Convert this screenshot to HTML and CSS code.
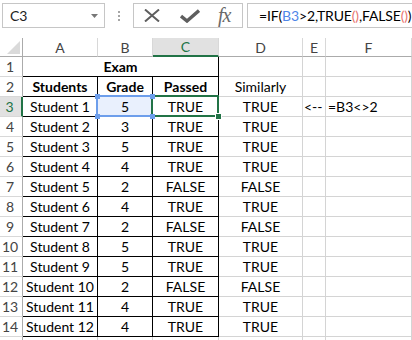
FILE: index.html
```html
<!DOCTYPE html>
<html lang="en">
<head>
    <meta charset="UTF-8">
    <title>Exam - Similarly</title>
    <link rel="stylesheet" href="styles.css">
</head>
<body>
    <div class="formula-bar">
        <div class="name-box">
            <span>C3</span>
            <svg class="dropdown" width="7" height="4" viewBox="0 0 7 4"><path d="M0 0 H7 L3.5 4 Z" fill="#777"/></svg>
        </div>
        <div class="grip"><i></i><i></i><i></i></div>
        <div class="fx-buttons">
            <svg class="icon-cancel" width="16" height="13" viewBox="0 0 16 13"><path d="M1 0.5 L15 12.5 M15 0.5 L1 12.5" stroke="#5e5e5e" stroke-width="2" fill="none"/></svg>
            <svg class="icon-enter" width="20" height="14" viewBox="0 0 20 14"><path d="M1 7 L7 12 L19 1.5" stroke="#5e5e5e" stroke-width="3.4" fill="none"/></svg>
            <span class="fx">fx</span>
        </div>
        <div class="formula-input">=IF(<span class="ref">B3</span>&gt;2,TRUE<span class="paren">()</span>,FALSE<span class="paren">()</span>)</div>
    </div>

    <div class="sheet">
        <!-- en-tetes de colonnes -->
        <div class="corner"></div>
        <div class="ch">A</div>
        <div class="ch">B</div>
        <div class="ch active">C</div>
        <div class="ch">D</div>
        <div class="ch">E</div>
        <div class="ch">F</div>

        <div class="rh">1</div>
        <div class="cell boxed bold span3">Exam</div>
        <div class="cell"></div>
        <div class="cell"></div>
        <div class="cell"></div>

        <div class="rh">2</div>
        <div class="cell boxed bold">Students</div>
        <div class="cell boxed bold">Grade</div>
        <div class="cell boxed bold">Passed</div>
        <div class="cell">Similarly</div>
        <div class="cell"></div>
        <div class="cell"></div>

        <div class="rh active">3</div>
        <div class="cell boxed">Student 1</div>
        <div class="cell boxed ref-cell">5
            <span class="handle tl"></span><span class="handle tr"></span><span class="handle bl"></span><span class="handle br"></span>
        </div>
        <div class="cell boxed active-cell">TRUE</div>
        <div class="cell">TRUE</div>
        <div class="cell left arrow">&lt;--</div>
        <div class="cell left note">=B3&lt;&gt;2</div>

        <div class="rh">4</div>
        <div class="cell boxed">Student 2</div>
        <div class="cell boxed">3</div>
        <div class="cell boxed">TRUE</div>
        <div class="cell">TRUE</div>
        <div class="cell"></div>
        <div class="cell"></div>

        <div class="rh">5</div>
        <div class="cell boxed">Student 3</div>
        <div class="cell boxed">5</div>
        <div class="cell boxed">TRUE</div>
        <div class="cell">TRUE</div>
        <div class="cell"></div>
        <div class="cell"></div>

        <div class="rh">6</div>
        <div class="cell boxed">Student 4</div>
        <div class="cell boxed">4</div>
        <div class="cell boxed">TRUE</div>
        <div class="cell">TRUE</div>
        <div class="cell"></div>
        <div class="cell"></div>

        <div class="rh">7</div>
        <div class="cell boxed">Student 5</div>
        <div class="cell boxed">2</div>
        <div class="cell boxed">FALSE</div>
        <div class="cell">FALSE</div>
        <div class="cell"></div>
        <div class="cell"></div>

        <div class="rh">8</div>
        <div class="cell boxed">Student 6</div>
        <div class="cell boxed">4</div>
        <div class="cell boxed">TRUE</div>
        <div class="cell">TRUE</div>
        <div class="cell"></div>
        <div class="cell"></div>

        <div class="rh">9</div>
        <div class="cell boxed">Student 7</div>
        <div class="cell boxed">2</div>
        <div class="cell boxed">FALSE</div>
        <div class="cell">FALSE</div>
        <div class="cell"></div>
        <div class="cell"></div>

        <div class="rh">10</div>
        <div class="cell boxed">Student 8</div>
        <div class="cell boxed">5</div>
        <div class="cell boxed">TRUE</div>
        <div class="cell">TRUE</div>
        <div class="cell"></div>
        <div class="cell"></div>

        <div class="rh">11</div>
        <div class="cell boxed">Student 9</div>
        <div class="cell boxed">5</div>
        <div class="cell boxed">TRUE</div>
        <div class="cell">TRUE</div>
        <div class="cell"></div>
        <div class="cell"></div>

        <div class="rh">12</div>
        <div class="cell boxed">Student 10</div>
        <div class="cell boxed">2</div>
        <div class="cell boxed">FALSE</div>
        <div class="cell">FALSE</div>
        <div class="cell"></div>
        <div class="cell"></div>

        <div class="rh">13</div>
        <div class="cell boxed">Student 11</div>
        <div class="cell boxed">4</div>
        <div class="cell boxed">TRUE</div>
        <div class="cell">TRUE</div>
        <div class="cell"></div>
        <div class="cell"></div>

        <div class="rh">14</div>
        <div class="cell boxed">Student 12</div>
        <div class="cell boxed">4</div>
        <div class="cell boxed">TRUE</div>
        <div class="cell">TRUE</div>
        <div class="cell"></div>
        <div class="cell"></div>

        <!-- ligne 15, coupee par le bas de la fenetre -->
        <div class="rh"></div>
        <div class="cell"></div>
        <div class="cell"></div>
        <div class="cell"></div>
        <div class="cell"></div>
        <div class="cell"></div>
        <div class="cell"></div>
    </div>
</body>
</html>
```

FILE: styles.css
```css
body {
    margin: 0;
    width: 412px;
    height: 340px;
    overflow: hidden;
    background: #fff;
    font-family: Lato, 'Liberation Sans', sans-serif;
    font-size: 14px;
    color: #000;
}
.formula-bar {
    display: flex;
    align-items: flex-start;
    height: 38px;
    padding-top: 3px;
    box-sizing: border-box;
}
.name-box {
    margin-left: 2px;
    width: 103px;
    height: 25px;
    box-sizing: border-box;
    border: 1px solid #c6c6c6;
    display: flex;
    align-items: center;
    padding-left: 7px;
    padding-right: 6px;
    color: #222;
}
.dropdown {
    margin-left: auto;
}
.grip {
    width: 28px;
    height: 25px;
    display: flex;
    flex-direction: column;
    align-items: center;
    justify-content: center;
    gap: 2px;
}
.grip i {
    width: 2px;
    height: 2px;
    background: #a6a6a6;
}
.fx-buttons {
    width: 110px;
    height: 25px;
    box-sizing: border-box;
    border: 1px solid #c6c6c6;
    display: flex;
    align-items: center;
    padding-left: 10px;
}
.icon-cancel {
    margin-right: 20px;
}
.icon-enter {
    margin-right: 18px;
}
.fx {
    font-family: 'Liberation Serif', serif;
    font-style: italic;
    font-size: 20px;
    color: #6a6a6a;
    letter-spacing: -1px;
}
.formula-input {
    flex: 1;
    margin-left: 4px;
    margin-right: -2px;
    height: 25px;
    box-sizing: border-box;
    border: 1px solid #c6c6c6;
    padding-left: 11px;
    line-height: 23px;
    font-size: 14px;
    letter-spacing: -0.15px;
    white-space: nowrap;
}
.ref {
    color: #4f86e8;
}
.paren {
    color: #e8746f;
}
.sheet {
    display: grid;
    grid-template-columns: 23px 75px 55px 66px 84px 23px 1fr;
    grid-template-rows: 19px;
    grid-auto-rows: 20px;
}
.sheet > div {
    box-sizing: border-box;
}
.corner {
    border-right: 1px solid #ababab;
    border-bottom: 1px solid #ababab;
    position: relative;
}
.corner::after {
    content: "";
    position: absolute;
    right: 2px;
    bottom: 2px;
    border-style: solid;
    border-width: 0 0 13px 13px;
    border-color: transparent transparent #dadada transparent;
}
.ch {
    border-right: 1px solid #d8d8d8;
    border-bottom: 1px solid #ababab;
    display: flex;
    align-items: center;
    justify-content: center;
    color: #444;
}
.ch.active {
    background: #e1e1e1;
    color: #217346;
    border-bottom: 2px solid #217346;
}
.rh {
    border-right: 1px solid #ababab;
    border-bottom: 1px solid #d8d8d8;
    display: flex;
    align-items: center;
    justify-content: center;
    padding-right: 2px;
    color: #444;
}
.rh.active {
    background: #e1e1e1;
    color: #217346;
    border-right: 2px solid #217346;
}
.cell {
    border-right: 1px solid #d4d4d4;
    border-bottom: 1px solid #d4d4d4;
    display: flex;
    align-items: flex-end;
    justify-content: center;
    line-height: 16px;
    padding-bottom: 1px;
    white-space: nowrap;
}
.boxed {
    border-right-color: #000;
    border-bottom-color: #000;
}
.bold {
    font-weight: bold;
}
.span3 {
    grid-column: span 3;
}
.left {
    justify-content: flex-start;
}
.arrow {
    padding-left: 1px;
}
.note {
    padding-left: 2px;
}
.ref-cell {
    position: relative;
    background: #e9f0fd;
}
.ref-cell::after {
    content: "";
    position: absolute;
    left: -2px;
    top: -2px;
    right: -1px;
    bottom: -1px;
    border: 2px solid #6d9eeb;
}
.handle {
    position: absolute;
    width: 5px;
    height: 5px;
    background: #6d9eeb;
    z-index: 2;
}
.handle.tl { left: -3px; top: -3px; }
.handle.tr { right: -3px; top: -3px; }
.handle.bl { left: -3px; bottom: -3px; }
.handle.br { right: -3px; bottom: -3px; }
.active-cell {
    position: relative;
}
.active-cell::after {
    content: "";
    position: absolute;
    left: -2px;
    top: -2px;
    right: -1px;
    bottom: -1px;
    border: 2px solid #217346;
}
.active-cell::before {
    content: "";
    position: absolute;
    right: -3px;
    bottom: -3px;
    width: 5px;
    height: 5px;
    background: #217346;
    outline: 1px solid #fff;
    z-index: 3;
}
```
